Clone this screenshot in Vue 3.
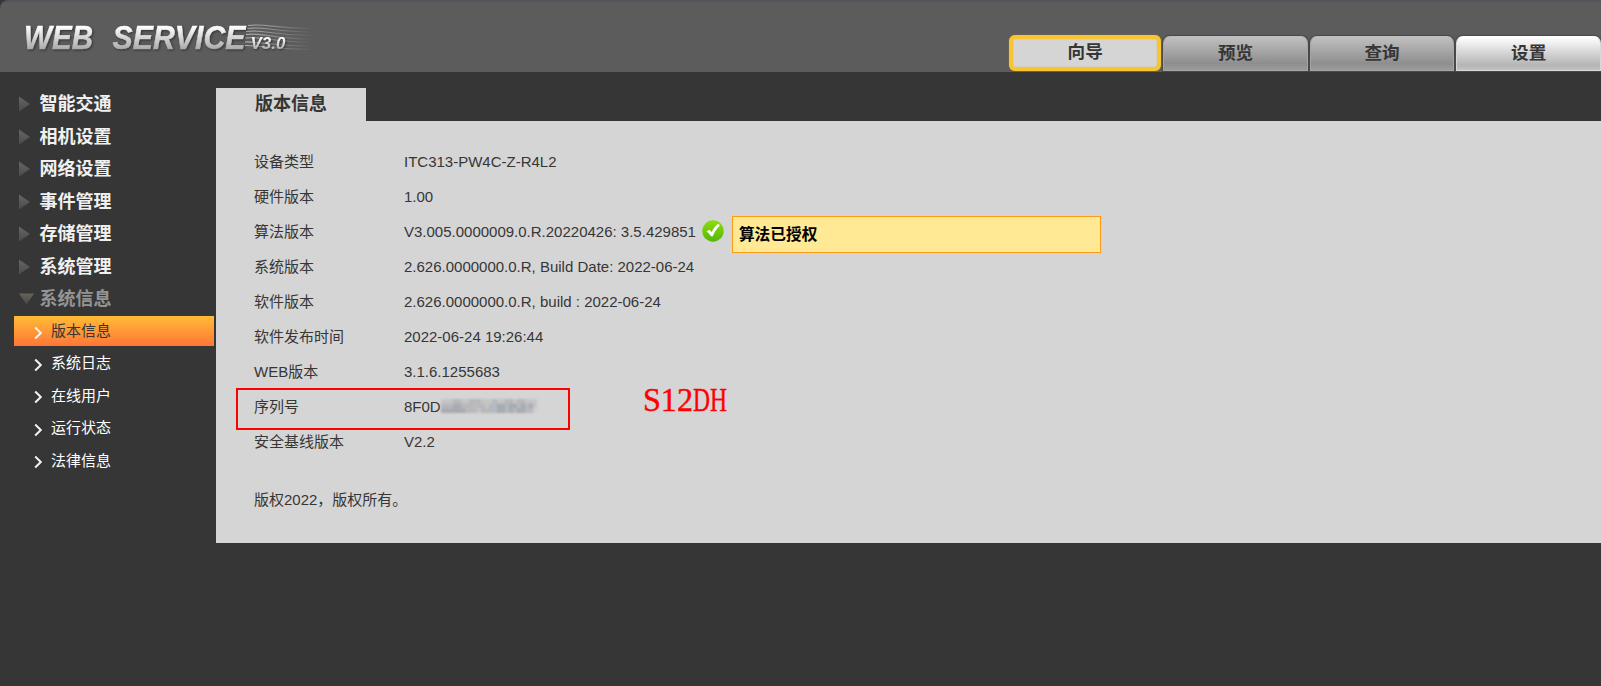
<template>
  <div class="page">
    <header class="header">
      <svg class="logo" width="320" height="60" viewBox="0 0 320 60">
        <defs>
          <linearGradient id="logoFill" x1="0" y1="0" x2="0" y2="1">
            <stop offset="0.2" stop-color="#ffffff"/>
            <stop offset="0.85" stop-color="#a6a6a6"/>
          </linearGradient>
          <linearGradient id="swoosh" gradientUnits="userSpaceOnUse" x1="246" y1="0" x2="312" y2="0">
            <stop offset="0" stop-color="#b0b0b0"/>
            <stop offset="1" stop-color="#b0b0b0" stop-opacity="0"/>
          </linearGradient>
        </defs>
        <g fill="none" stroke="url(#swoosh)" stroke-width="1.1">
          <path d="M248 25.500C264 23 274 28.500 312 28.600"/>
          <path d="M247 28.500C264 26 274 32 312 32.100"/>
          <path d="M246 31.500C264 29 272 35.500 312 35.600"/>
          <path d="M246 34.500C262 32 272 39 312 39.100"/>
          <path d="M245 38C260 36 274 42 312 42.500"/>
          <path d="M245 42C256 41 270 46 312 46.100"/>
          <path d="M245 45.500C256 45 270 49.500 312 49.600"/>
        </g>
        <g class="logo-text" fill="url(#logoFill)">
          <text x="24" y="49" textLength="69" lengthAdjust="spacingAndGlyphs">WEB</text>
          <text x="112.5" y="49" textLength="133" lengthAdjust="spacingAndGlyphs">SERVICE</text>
          <text class="logo-version" x="250.5" y="49" textLength="35" lengthAdjust="spacingAndGlyphs">V3.0</text>
        </g>
      </svg>
      <nav class="tabs">
        <button
          v-for="tab in tabs"
          :key="tab.label"
          class="tab"
          :class="tab.state"
        >{{ tab.label }}</button>
      </nav>
    </header>

    <div class="main">
      <aside class="sidebar">
        <div v-for="item in menu" :key="item.label" class="menu-item" :class="{ open: item.open }">
          <svg class="menu-arrow" width="16" height="16" viewBox="0 0 16 16">
            <defs>
              <linearGradient id="arrowFill" x1="0" y1="0" x2="0" y2="1">
                <stop offset="0" stop-color="#666"/>
                <stop offset="1" stop-color="#4a4a4a"/>
              </linearGradient>
              <linearGradient id="arrowOpen" x1="0" y1="0" x2="0" y2="1">
                <stop offset="0" stop-color="#69645a"/>
                <stop offset="1" stop-color="#484744"/>
              </linearGradient>
            </defs>
            <path v-if="item.open" d="M0 2.500H15L7.500 13.500Z" fill="url(#arrowOpen)"/>
            <path v-else d="M0 0.500V15.500L11 8Z" fill="url(#arrowFill)"/>
          </svg>
          <span>{{ item.label }}</span>
        </div>
        <div
          v-for="(label, i) in subMenu"
          :key="label"
          class="sub-item"
          :class="{ active: i === 0 }"
        >
          <svg class="chevron" width="9" height="14" viewBox="0 0 9 14">
            <path d="M1.200 1.500L6.800 7L1.200 12.500" fill="none" stroke="currentColor" stroke-width="2"/>
          </svg>
          <span>{{ label }}</span>
        </div>
      </aside>

      <section class="content">
        <div class="content-tab">版本信息</div>
        <div class="panel">
          <div v-for="row in rows" :key="row.label" class="row">
            <span class="row-label">{{ row.label }}</span>
            <span class="row-value">{{ row.value }}</span>
            <template v-if="row.notice">
              <svg class="check" width="22" height="22" viewBox="0 0 22 22">
                <defs>
                  <linearGradient id="checkFill" x1="0" y1="0" x2="0" y2="1">
                    <stop offset="0" stop-color="#8fdc0c"/>
                    <stop offset="1" stop-color="#52b808"/>
                  </linearGradient>
                </defs>
                <circle cx="11" cy="11" r="10.700" fill="url(#checkFill)"/>
                <path d="M4.600 11.600L7.400 9.800L9.600 12C11.500 8.500 13.500 5.800 16 3.800L18 5.300C14.800 8.500 12.500 12 10.800 16.300H9C7.900 14.500 6.500 12.900 4.600 11.600Z" fill="#fff"/>
              </svg>
              <div class="notice">{{ row.notice }}</div>
            </template>
            <svg v-if="row.masked" class="mosaic" width="96" height="14" viewBox="0 0 96 14">
              <rect
                v-for="(cell, i) in mosaic"
                :key="i"
                :x="(i % 24) * 4"
                :y="Math.floor(i / 24) * 4.7"
                width="4.1"
                height="4.8"
                :fill="cell"
              />
            </svg>
          </div>
          <p class="copyright">版权2022，版权所有。</p>
          <div class="mark-box"></div>
          <svg class="mark-text" width="110" height="50" viewBox="0 0 110 50">
            <text x="10" y="36"><tspan textLength="50" lengthAdjust="spacingAndGlyphs">S12</tspan><tspan textLength="34" lengthAdjust="spacingAndGlyphs">DH</tspan></text>
          </svg>
        </div>
      </section>
    </div>
  </div>
</template>

<script setup>
const tabs = [
  { label: '向导', state: 'guide' },
  { label: '预览' },
  { label: '查询' },
  { label: '设置', state: 'current' }
]

const menu = [
  { label: '智能交通' },
  { label: '相机设置' },
  { label: '网络设置' },
  { label: '事件管理' },
  { label: '存储管理' },
  { label: '系统管理' },
  { label: '系统信息', open: true }
]

const subMenu = ['版本信息', '系统日志', '在线用户', '运行状态', '法律信息']

const rows = [
  { label: '设备类型', value: 'ITC313-PW4C-Z-R4L2' },
  { label: '硬件版本', value: '1.00' },
  { label: '算法版本', value: 'V3.005.0000009.0.R.20220426: 3.5.429851', notice: '算法已授权' },
  { label: '系统版本', value: '2.626.0000000.0.R, Build Date: 2022-06-24' },
  { label: '软件版本', value: '2.626.0000000.0.R, build : 2022-06-24' },
  { label: '软件发布时间', value: '2022-06-24 19:26:44' },
  { label: 'WEB版本', value: '3.1.6.1255683' },
  { label: '序列号', value: '8F0D', masked: true },
  { label: '安全基线版本', value: 'V2.2' }
]

// three rows of grey levels covering the serial number
const levels = {
  a: '#cfcfcf',
  b: '#c4c4c5',
  c: '#b6b7ba',
  d: '#a6a9ae',
  e: '#aebac8',
  f: '#c2bab3'
}
const mosaic = [
  ...'bbbccbbcccbbbcbbccbccbbb',
  ...'cccddcccfccbceddcddedcdb',
  ...'ddddddcccbccceddedcddeca'
].map(c => levels[c])
</script>

<style>
body {
  margin: 0;
  background: #363636;
}
</style>

<style scoped>
.page {
  height: 686px;
  overflow: hidden;
  background: #363636;
  color: #363636;
  font-family: "Liberation Sans", "Noto Sans CJK SC", sans-serif;
  font-size: 15px;
}

.header {
  display: flex;
  justify-content: space-between;
  align-items: flex-end;
  height: 72px;
  box-sizing: border-box;
  border-top: 2px solid #53545c;
  border-top-left-radius: 8px;
  background: #5c5c5c;
}

.logo {
  align-self: flex-start;
  margin-top: -2px;
}

.logo-text {
  stroke: url(#logoFill);
  stroke-width: 0.5px;
  font-size: 33px;
  font-weight: bold;
  font-style: italic;
  filter: drop-shadow(1px 1px 1px rgba(0, 0, 0, 0.45));
}

.logo-version {
  stroke: none;
  font-size: 17px;
}

.tabs {
  display: flex;
  align-items: flex-end;
  gap: 2px;
  height: 36px;
  padding-bottom: 1px;
}

.tab {
  width: 144.6px;
  height: 35px;
  padding: 0;
  box-sizing: border-box;
  border: 1px solid #a5a5a5;
  border-top-color: #bdbdbd;
  border-radius: 7px 7px 0 0;
  background: linear-gradient(#c0c0c0, #8e8e8e 80%, #9b9b9b);
  box-shadow: 0 0 1px 1px #484848;
  color: #363636;
  font-family: inherit;
  font-size: 17.6px;
  font-weight: bold;
  line-height: 31px;
}

.tab.current {
  border-color: #d8d8d8;
  border-top-color: #fff;
  background: linear-gradient(#fff, #b5b5b5 85%, #c2c2c2);
}

.tab.guide {
  width: 152px;
  height: 36px;
  padding-bottom: 2px;
  border: 4px solid #f9c432;
  border-radius: 6px;
  background: #d5d5d5;
  box-shadow: inset 0 0 1px #d49d1c, 0 0 1px #b98d22;
  line-height: 25px;
}

.main {
  display: flex;
  align-items: flex-start;
  padding-top: 16px;
}

.sidebar {
  width: 200px;
  padding: 0 2px 0 14px;
}

.menu-item {
  display: flex;
  align-items: center;
  gap: 5px;
  height: 32.5px;
  padding-left: 5px;
  color: #f0f0f0;
  font-size: 18px;
  font-weight: bold;
  line-height: 30px;
}

.menu-item span {
  margin-left: -0.5px;
}

.menu-item.open {
  color: #949494;
}

.menu-arrow {
  flex: none;
}

.sub-item {
  display: flex;
  align-items: center;
  gap: 8px;
  height: 30px;
  margin: 0.5px 0 2.4px;
  padding-left: 20px;
  color: #fff;
  line-height: 28px;
}

.sub-item.active {
  background: linear-gradient(#ffbc36, #ff7638);
  color: #363636;
}

.chevron {
  margin-top: 3px;
  color: #f2f2f2;
}

.content {
  flex: 1;
}

.content-tab {
  width: 150px;
  height: 33px;
  box-sizing: border-box;
  padding-left: 39px;
  background: #d5d5d5;
  font-size: 18px;
  font-weight: bold;
  line-height: 32px;
}

.panel {
  position: relative;
  height: 422px;
  box-sizing: border-box;
  padding: 22px 0 0 38px;
  background: #d5d5d5;
}

.row {
  display: flex;
  align-items: center;
  height: 35px;
  white-space: nowrap;
}

.row-label {
  width: 150px;
}

.row-value {
  padding-top: 1px;
}

.check {
  margin: 1px 0 0 6px;
}

.notice {
  width: 369px;
  height: 37px;
  margin: 7px 0 0 8px;
  padding-left: 6px;
  box-sizing: border-box;
  border: 1px solid #ff9a14;
  background: #ffe994;
  color: #000;
  font-size: 15.7px;
  font-weight: bold;
  line-height: 35px;
}

.mosaic {
  margin-top: 1px;
  filter: blur(0.8px);
}

.copyright {
  margin: 24px 0 0;
  line-height: 35px;
}

/* hand-drawn marks over the serial number row */
.mark-box {
  position: absolute;
  top: 267px;
  left: 20px;
  width: 334px;
  height: 42px;
  box-sizing: border-box;
  border: 2px solid #f00;
}

.mark-text {
  position: absolute;
  top: 254px;
  left: 417px;
  fill: #f00;
  stroke: #f00;
  stroke-width: 0.4px;
  font-family: "Liberation Serif", serif;
  font-size: 33px;
}
</style>
